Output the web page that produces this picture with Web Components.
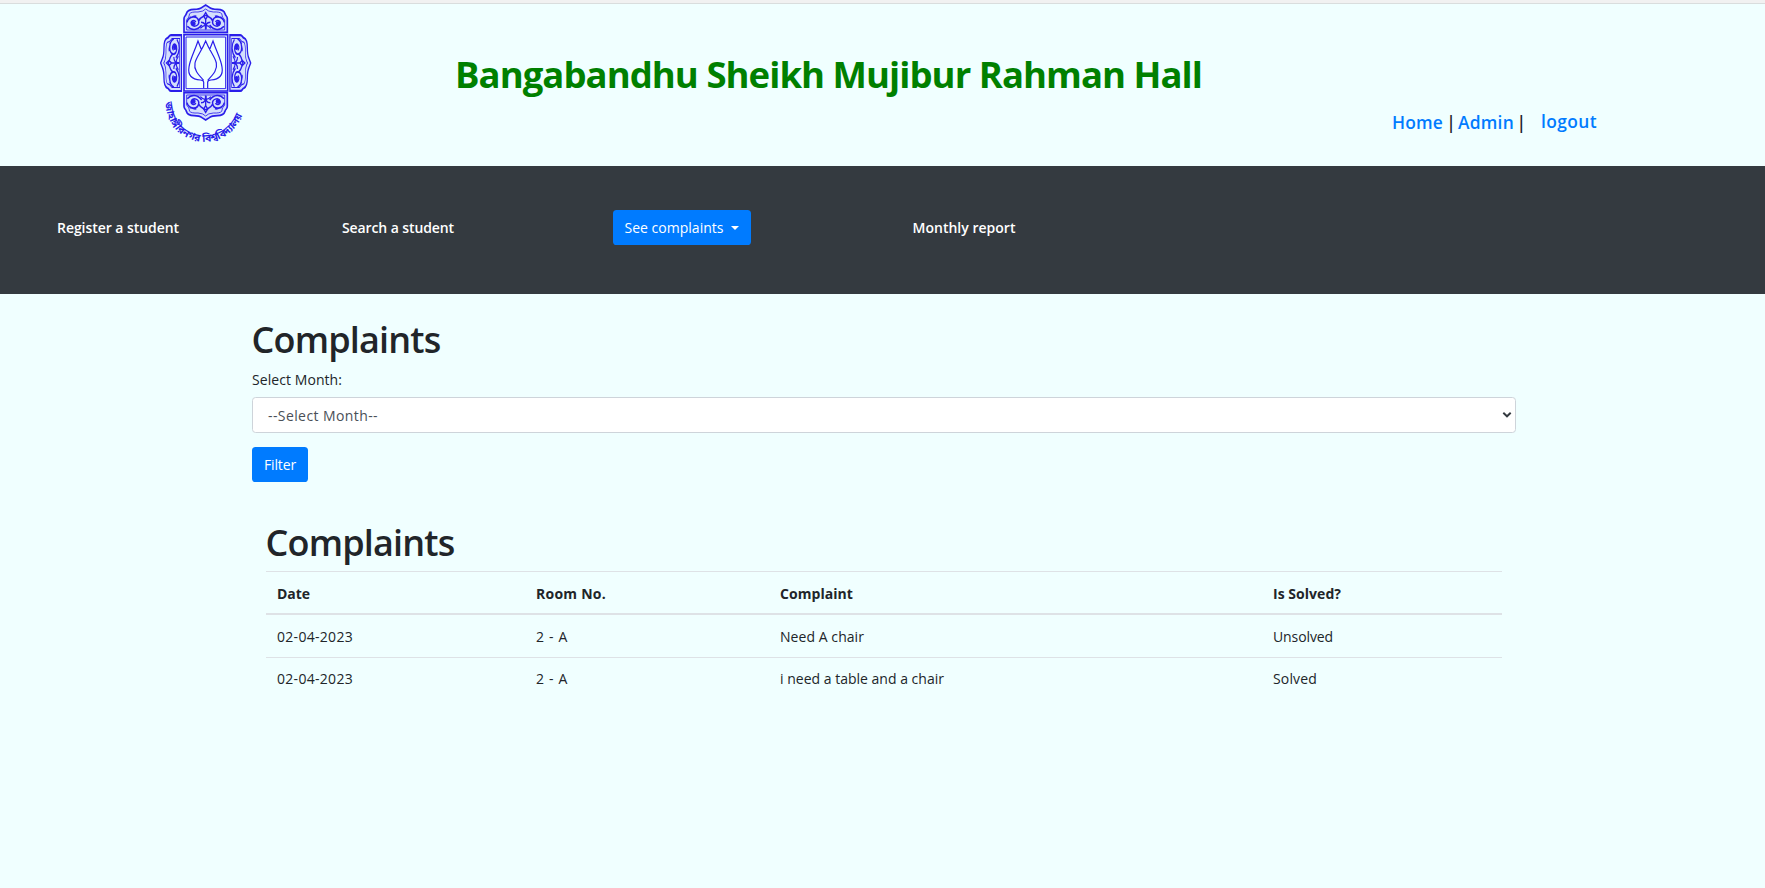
<!DOCTYPE html>
<html lang="en">
<head>
<meta charset="utf-8">
<title>Complaints</title>
<style>
html,body{margin:0;background:#f0ffff}
body{font:14px/20px "Open Sans","Noto Sans",sans-serif;color:#212529;overflow:hidden}
</style>
</head>
<body>
<hall-app></hall-app>
<script>
function define(name, html, init){
  const t=document.createElement('template');
  t.innerHTML=html;
  customElements.define(name,class extends HTMLElement{
    connectedCallback(){
      if(this.shadowRoot)return;
      this.attachShadow({mode:'open'}).append(t.content.cloneNode(true));
      if(init)init.call(this);
    }
  });
}

/* Text run tracked to a given measure */
define('fit-text',`<style>:host{display:block;white-space:nowrap;flex:none}span{display:inline-block}</style><span><slot></slot></span>`,function(){
  const w=+this.getAttribute('w'),s=this.shadowRoot.querySelector('span');
  this.style.width=w+'px';
  const natural=s.getBoundingClientRect().width,n=this.textContent.length;
  s.style.letterSpacing=((w-natural)/n).toFixed(3)+'px';
});

define('hall-logo',`<style>:host{display:block;width:130px;height:150px;flex:none}svg{display:block}</style>
<svg width="130" height="150" viewBox="0 0 390 450" fill="none" stroke="#2a1eea" stroke-width="4">
<defs>
<g id="curl"><path d="M3 22C8 3 34 0 38 18C41 33 21 39 16 27C13 18 26 12 29 21M38 18C44 4 55 5 59 0M4 34C16 47 34 47 47 30M45 22C56 22 60 30 59 43M11 6C18 11 23 0 31 4" stroke-width="4.5"/><circle cx="22" cy="26" r="5" fill="#2a1eea"/></g>
<g id="panel">
<path d="M132 94V53C132 44 138 45 139 38C142 27 150 25 162 25C175 25 181 23 186 19L197 12L208 19C213 23 219 25 232 25C244 25 252 27 255 38C256 45 262 44 262 53V94Z" stroke-width="5" fill="#2a1eea" fill-opacity=".14"/>
<path d="M140 87V57Q148 49 149 38Q154 32 174 33Q190 32 197 24Q204 32 220 33Q240 32 245 38Q246 49 254 57V87Z" stroke-width="2.5"/>
<use href="#curl" transform="translate(138 42)"/><use href="#curl" transform="translate(256 42) scale(-1 1)"/>
<path d="M197 35L203 45L197 55L191 45ZM197 56V84M181 82Q197 64 213 82" stroke-width="4"/></g>
</defs>
<use href="#panel"/>
<use href="#panel" transform="translate(0 369) scale(1 -1)"/>
<g transform="translate(62 186) rotate(-90) scale(1.29 .76) translate(-197 -12)"><use href="#panel"/></g>
<g transform="translate(332 186) rotate(90) scale(1.29 .76) translate(-197 -12)"><use href="#panel"/></g>
<path d="M132 101H263V270H132Z" stroke-width="5"/>
<path d="M138 108H257V263H138Z" stroke-width="3"/>
<path d="M191 262V243Q190 238 181 237C154 235 143 222 147 198C150 175 163 153 174 120L185 148M203 262V243Q204 238 213 237C239 235 250 222 246 198C243 175 230 153 219 120L208 148M191 238C172 218 161 205 165 186C169 168 184 152 197 120C210 152 225 168 229 186C233 205 222 218 203 238" stroke-width="3.6"/>
<path id="arc" d="M76 304C86 464 308 464 318 290" stroke="none"/>
<text font-family="'Noto Sans Bengali','Noto Sans',sans-serif" font-size="31" font-weight="700" fill="#2a1eea" stroke="none"><textPath href="#arc">জাহাঙ্গীরনগর বিশ্ববিদ্যালয়</textPath></text>
</svg>`);

define('hall-header',`<style>
:host{display:flex;height:162px;padding-left:140px;border-top:1px solid #d9dddd;box-sizing:content-box}
hall-logo{margin-top:-3px}
h1{margin:48px 0 0 185px;font-size:36.5px;line-height:44px;font-weight:700;color:green}
nav{display:flex;font-size:17.4px;line-height:26px;font-weight:600;margin:105px 0 0 190px;height:26px}
a{color:#007bff;text-decoration:none}
.out{margin:-1px 0 0 17px}
</style>
<hall-logo></hall-logo>
<h1><fit-text w="747">Bangabandhu Sheikh Mujibur Rahman Hall</fit-text></h1>
<nav><a><fit-text w="51">Home</fit-text></a><fit-text w="15">&nbsp;|&nbsp;</fit-text><a><fit-text w="56">Admin</fit-text></a><fit-text w="10">&nbsp;|</fit-text><a class="out"><fit-text w="56">logout</fit-text></a></nav>`);

define('hall-button',`<style>:host{display:flex;box-sizing:border-box;height:35px;background:#007bff;color:#fff;border-radius:3.6px;padding:8px 12px;font-size:14px;line-height:20px;font-weight:400;align-items:flex-start}</style><slot></slot>`);

define('hall-nav',`<style>
:host{display:grid;grid-template-columns:285px 270.5px 300px auto;height:128px;background:#343a40;color:#fff;font-weight:600;padding-left:57px;box-sizing:border-box;align-items:start}
fit-text.l{margin-top:51px;line-height:21px}
hall-button{margin-top:44px;width:138px}
i{width:0;height:0;border:4.3px solid transparent;border-top-color:#fff;border-bottom:0;margin:8px 0 0 7px}
</style>
<fit-text class="l" w="122">Register a student</fit-text>
<fit-text class="l" w="112">Search a student</fit-text>
<hall-button><fit-text w="99">See complaints</fit-text><i></i></hall-button>
<fit-text class="l" w="103">Monthly report</fit-text>`);

define('month-filter',`<style>
:host{display:block;margin:26px 249px 0 252px}
h1{margin:0 0 0 -.5px;font-size:36px;line-height:40px;font-weight:600}
.label{margin-top:10px}
.select{box-sizing:border-box;height:36px;margin-top:7px;background:#fff;border:1px solid #ced4da;border-radius:3.6px;color:#495057;display:flex;justify-content:space-between;padding:8px 3px 0 15px}
svg{margin-top:5px}
hall-button{width:56px;margin-top:14px}
</style>
<h1><fit-text w="189">Complaints</fit-text></h1>
<fit-text class="label" w="90">Select Month:</fit-text>
<div class="select"><fit-text w="110">--Select Month--</fit-text><svg width="10" height="8" viewBox="0 0 10 8"><path d="M1.3 1.7L5 5.3L8.7 1.7" fill="none" stroke="#343a40" stroke-width="1.9"/></svg></div>
<hall-button><fit-text w="32">Filter</fit-text></hall-button>`);

define('complaint-table',`<style>
:host{display:block;margin:41px 263px 0 266px}
h1{margin:0 0 0 -.5px;font-size:36px;line-height:40px;font-weight:600}
.row{display:grid;grid-template-columns:259px 244px 493px auto;padding-left:11px;height:43px;border-top:1px solid #dee2e6;align-items:start;box-sizing:border-box;padding-top:11px}
.head{font-weight:700;height:44px;margin-top:8px;border-bottom:2px solid #dee2e6;padding-top:12px}
.first{border-top:0;height:42px;padding-top:12px}
</style>
<h1><fit-text w="189">Complaints</fit-text></h1>
<div class="row head"><fit-text w="33">Date</fit-text><fit-text w="70">Room No.</fit-text><fit-text w="73">Complaint</fit-text><fit-text w="68">Is Solved?</fit-text></div>
<div class="row first"><fit-text w="76">02-04-2023</fit-text><fit-text w="32">2 - A</fit-text><fit-text w="84">Need A chair</fit-text><fit-text w="60">Unsolved</fit-text></div>
<div class="row"><fit-text w="76">02-04-2023</fit-text><fit-text w="32">2 - A</fit-text><fit-text w="164">i need a table and a chair</fit-text><fit-text w="44">Solved</fit-text></div>`);

define('hall-app',`<style>:host{display:flow-root;height:888px;background:#f0ffff}.edge{height:3px;background:#f1f1f1}</style>
<div class="edge"></div><hall-header></hall-header><hall-nav></hall-nav><month-filter></month-filter><complaint-table></complaint-table>`);
</script>
</body>
</html>
